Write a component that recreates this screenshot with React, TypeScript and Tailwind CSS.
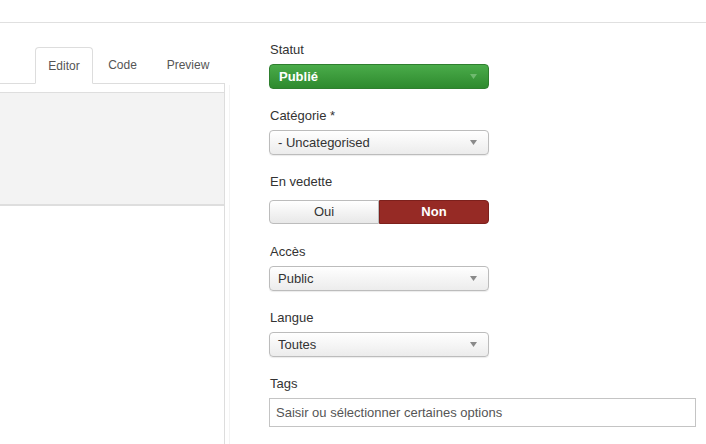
import React from "react";

function Arrow({ color }: { color: string }) {
  return (
    <svg width="7" height="5" viewBox="0 0 7 5" className="shrink-0">
      <path d="M0 0 L7 0 L3.5 5 Z" fill={color} />
    </svg>
  );
}

function Select({ value }: { value: string }) {
  return (
    <div className="w-[220px] h-[25px] flex items-center justify-between pl-[8px] pr-[11px] rounded-[4px] border border-[#bcbcbc] bg-gradient-to-b from-[#ffffff] to-[#ececec] text-[13px] text-[#333] shadow-[0_1px_1px_rgba(0,0,0,0.08)]">
      <span>{value}</span>
      <Arrow color="#8a8a8a" />
    </div>
  );
}

function Label({ children, mb = "mb-[6px]" }: { children: React.ReactNode; mb?: string }) {
  return (
    <div className={`h-[18px] pt-[2px] leading-[16px] text-[13px] text-[#333] pl-[1px] ${mb}`}>{children}</div>
  );
}

export default function App() {
  return (
    <div
      className="w-[706px] h-[444px] overflow-hidden bg-white flex flex-col"
      style={{ fontFamily: '"Liberation Sans", Arial, sans-serif' }}
    >
      <div className="h-[23px] shrink-0 border-b border-[#e0e0e0]" />
      <div className="flex flex-1 min-h-0">
        {/* left column */}
        <div className="w-[225px] shrink-0 flex flex-col">
          <div className="pt-[24px] border-b border-[#dddddd] flex justify-end pr-[1px]">
            <div className="w-[58px] h-[37px] -mb-px border border-[#dddddd] border-b-white bg-white rounded-t-[4px] flex items-center justify-center text-[12px] text-[#555]">
              Editor
            </div>
            <div className="w-[59px] h-[36px] flex items-center justify-center text-[12px] text-[#555]">Code</div>
            <div className="w-[72px] h-[36px] flex items-center justify-center text-[12px] text-[#555]">Preview</div>
          </div>
          <div className="flex-1 border-r border-[#dddddd] pt-[8px]">
            <div className="h-[114px] bg-[#f3f3f3] border-t border-b-2 border-[#dedede]" />
          </div>
        </div>
        <div className="w-[5px] shrink-0 border-r border-[#f3f3f3] mt-[62px]" />
        {/* right column */}
        <div className="pl-[39px] pt-[17px] flex flex-col">
          <Label>Statut</Label>
          <div className="w-[220px] h-[25px] mb-[17px] flex items-center justify-between pl-[9px] pr-[11px] rounded-[4px] border border-[#2f7f2f] bg-gradient-to-b from-[#4aac4a] to-[#2e8a2e] text-[13px] font-bold text-white">
            <span>Publié</span>
            <Arrow color="#6fba6f" />
          </div>

          <Label>Catégorie *</Label>
          <div className="mb-[17px]">
            <Select value="- Uncategorised" />
          </div>

          <Label mb="mb-[10px]">En vedette</Label>
          <div className="w-[220px] h-[24px] mb-[18px] flex text-[13px]">
            <div className="w-[110px] flex items-center justify-center rounded-l-[4px] border border-[#bcbcbc] bg-gradient-to-b from-[#ffffff] to-[#e8e8e8] text-[#333]">
              Oui
            </div>
            <div className="flex-1 flex items-center justify-center rounded-r-[4px] border border-[#7d201c] bg-[#962a25] text-white font-bold">
              Non
            </div>
          </div>

          <Label>Accès</Label>
          <div className="mb-[17px]">
            <Select value="Public" />
          </div>

          <Label>Langue</Label>
          <div className="mb-[17px]">
            <Select value="Toutes" />
          </div>

          <Label>Tags</Label>
          <div className="w-[427px] h-[29px] border border-[#c4c4c4] flex items-center pl-[6px] text-[13px] text-[#555]">
            Saisir ou sélectionner certaines options
          </div>
        </div>
      </div>
    </div>
  );
}
